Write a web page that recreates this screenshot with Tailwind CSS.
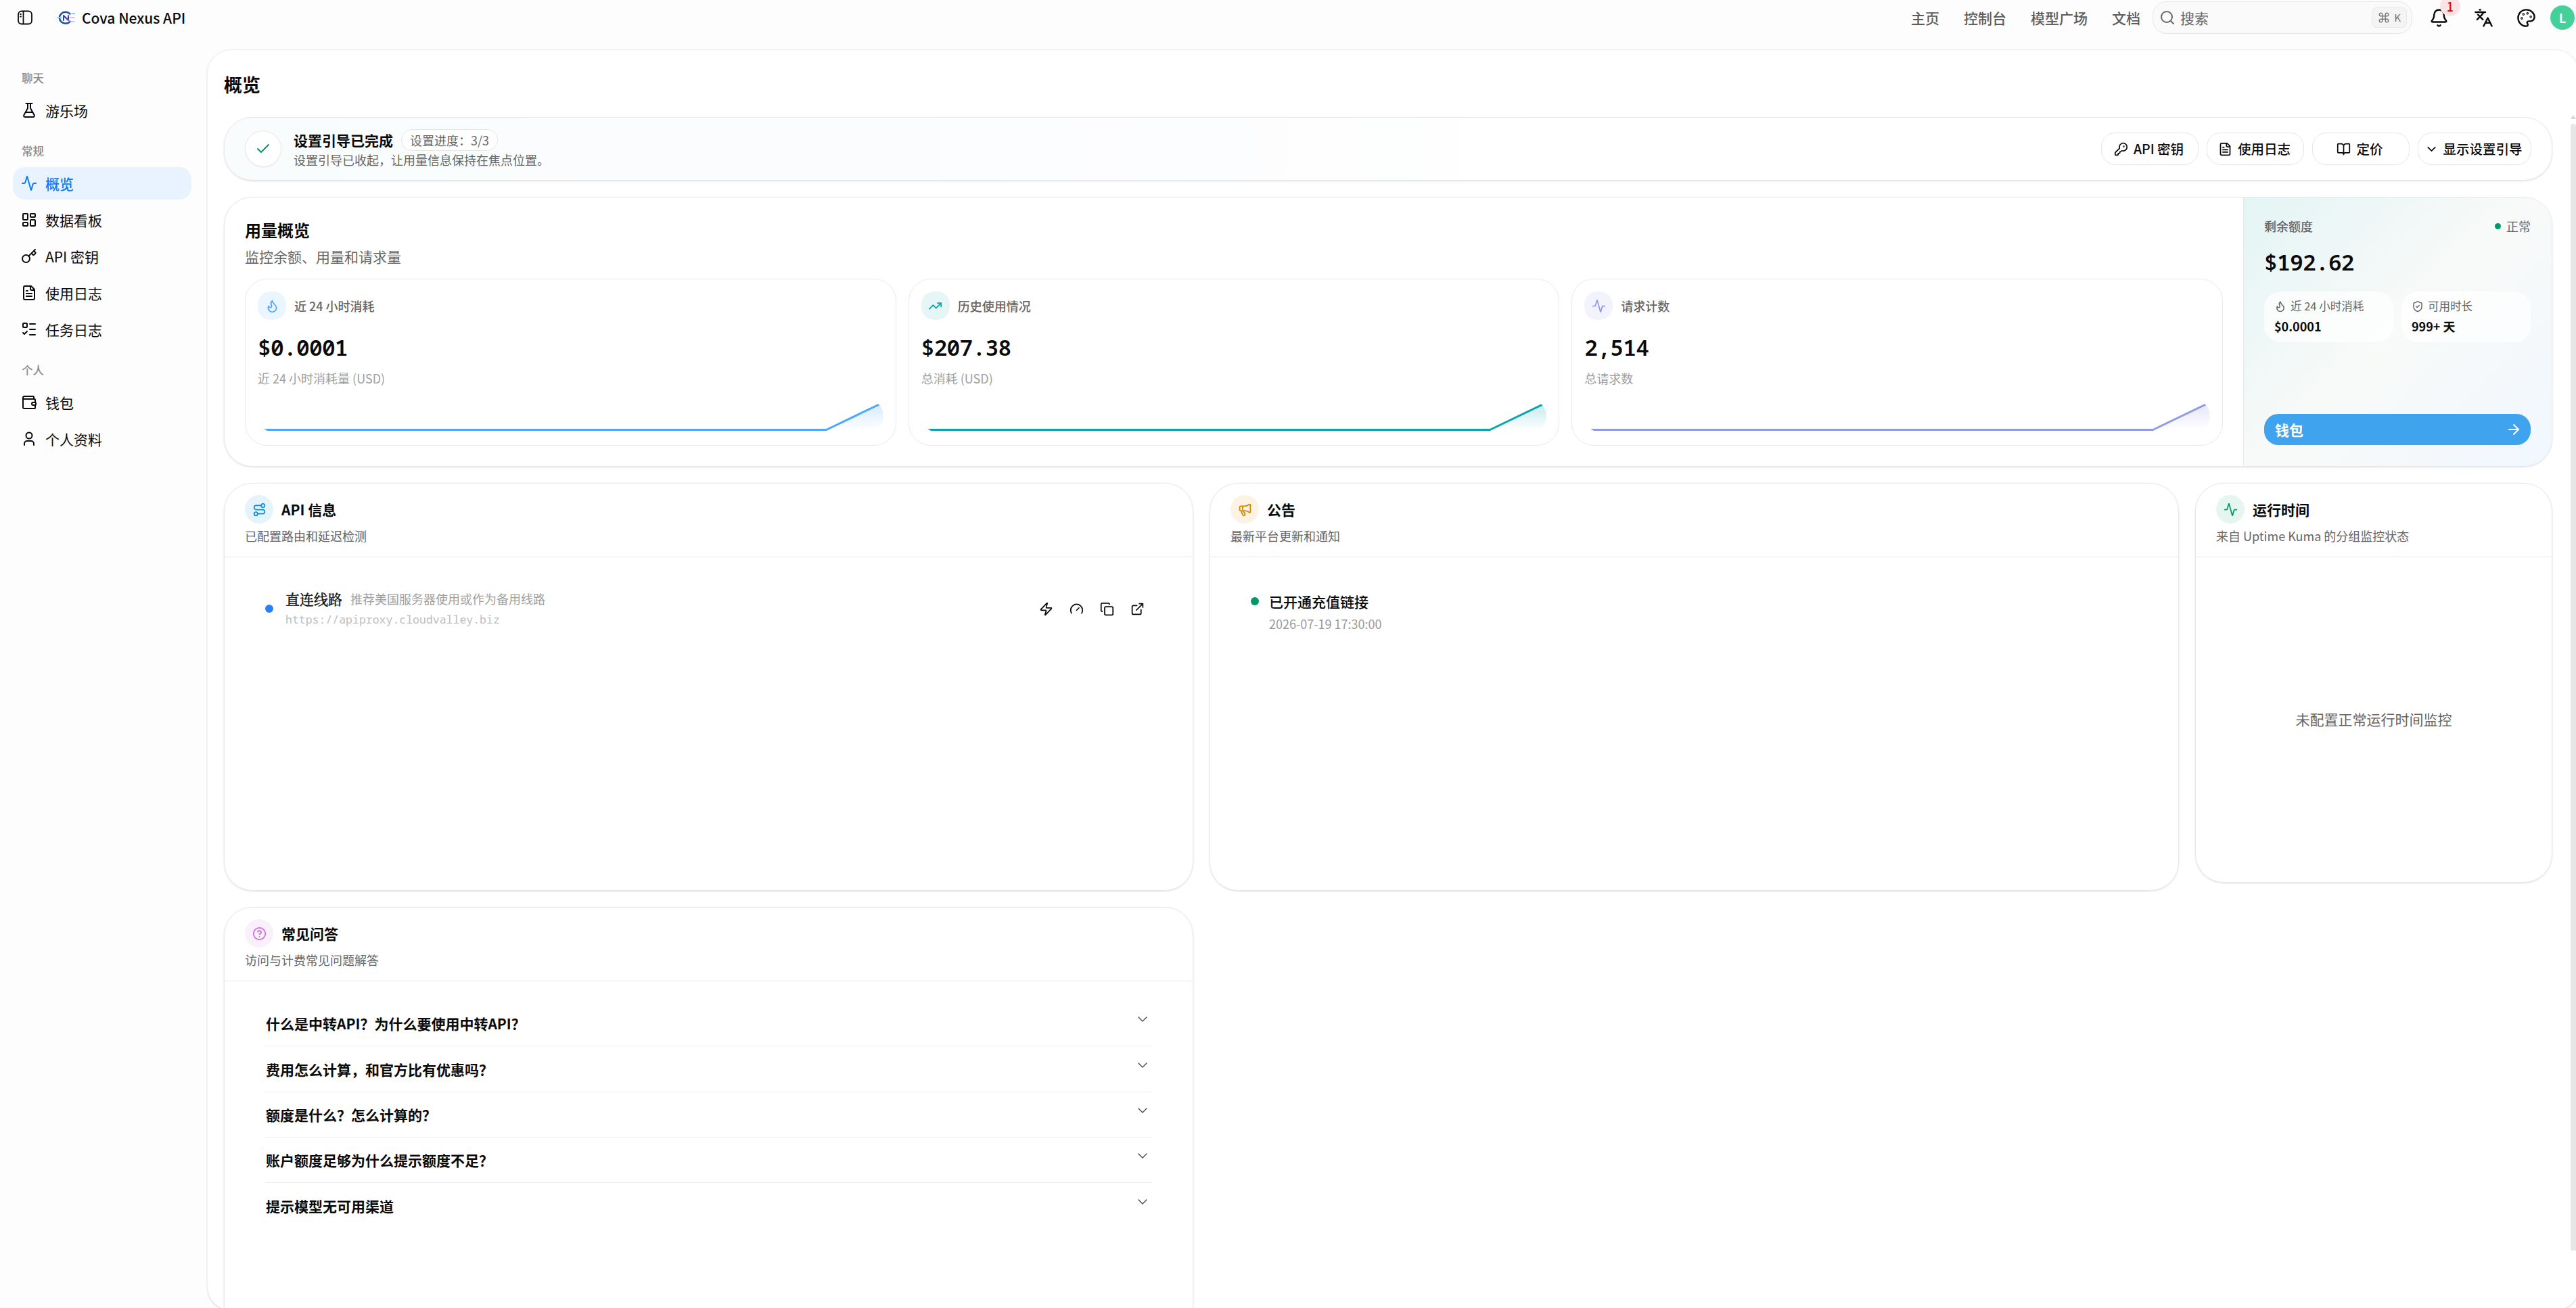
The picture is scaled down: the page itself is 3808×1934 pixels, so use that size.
<!DOCTYPE html>
<html lang="zh-CN">
<head>
<meta charset="utf-8">
<title>Cova Nexus API</title>
<script src="https://cdn.jsdelivr.net/npm/@tailwindcss/browser@4"></script>
</head>
<body class="w-[3808px] h-[1934px] overflow-hidden bg-[#fdfdfd] text-[#0a0a0a] font-['Noto_Sans_CJK_SC',sans-serif] text-[21px] leading-[30px]">
<svg class="absolute w-0 h-0" aria-hidden="true">
  <defs>
    <symbol id="flask" viewBox="0 0 24 24"><path d="M14 2v6.5a2 2 0 0 0 .25.96l5.5 9.9A1.8 1.8 0 0 1 18.2 22H5.8a1.8 1.8 0 0 1-1.55-2.64l5.5-9.9A2 2 0 0 0 10 8.5V2M7.5 2h9M7 15h10"/></symbol>
    <symbol id="activity" viewBox="0 0 24 24"><path d="M22 12h-2.48a2 2 0 0 0-1.93 1.46l-2.35 8.36a.25.25 0 0 1-.48 0L9.24 2.18a.25.25 0 0 0-.48 0l-2.35 8.36A2 2 0 0 1 4.49 12H2"/></symbol>
    <symbol id="dash" viewBox="0 0 24 24"><rect x="3" y="3" width="7" height="9" rx="1"/><rect x="14" y="3" width="7" height="5" rx="1"/><rect x="14" y="12" width="7" height="9" rx="1"/><rect x="3" y="16" width="7" height="5" rx="1"/></symbol>
    <symbol id="key" viewBox="0 0 24 24"><path d="m15.5 7.5 2.3 2.3a1 1 0 0 0 1.4 0l2.1-2.1a1 1 0 0 0 0-1.4L19 4M21 2l-9.6 9.6"/><circle cx="7.5" cy="15.5" r="5.5"/></symbol>
    <symbol id="keyround" viewBox="0 0 24 24"><path d="M2.586 17.414A2 2 0 0 0 2 18.828V21a1 1 0 0 0 1 1h3a1 1 0 0 0 1-1v-1a1 1 0 0 1 1-1h1a1 1 0 0 0 1-1v-1a1 1 0 0 1 1-1h.172a2 2 0 0 0 1.414-.586l.814-.814a6.5 6.5 0 1 0-4-4z"/><circle cx="16.5" cy="7.5" r=".5"/></symbol>
    <symbol id="file" viewBox="0 0 24 24"><path d="M15 2H6a2 2 0 0 0-2 2v16a2 2 0 0 0 2 2h12a2 2 0 0 0 2-2V7ZM14 2v4a2 2 0 0 0 2 2h4M10 9H8M16 13H8M16 17H8"/></symbol>
    <symbol id="todo" viewBox="0 0 24 24"><rect x="3" y="3" width="6" height="6" rx="1"/><path d="m3 17 2 2 4-4M13 4h8M13 12h8M13 20h8"/></symbol>
    <symbol id="wallet" viewBox="0 0 24 24"><path d="M19 7V4a1 1 0 0 0-1-1H5a2 2 0 0 0 0 4h15a1 1 0 0 1 1 1v4h-3a2 2 0 0 0 0 4h3a1 1 0 0 0 1-1v-2a1 1 0 0 0-1-1M3 5v14a2 2 0 0 0 2 2h15a1 1 0 0 0 1-1v-4"/></symbol>
    <symbol id="user" viewBox="0 0 24 24"><circle cx="12" cy="7" r="4.5"/><path d="M19 21v-2a4 4 0 0 0-4-4H9a4 4 0 0 0-4 4v2"/></symbol>
    <symbol id="search" viewBox="0 0 24 24"><circle cx="11" cy="11" r="8"/><path d="m21 21-4.3-4.3"/></symbol>
    <symbol id="bell" viewBox="0 0 24 24"><path d="M10.268 21a2 2 0 0 0 3.464 0M3.262 15.326A1 1 0 0 0 4 17h16a1 1 0 0 0 .74-1.673C19.41 13.956 18 12.499 18 8A6 6 0 0 0 6 8c0 4.499-1.411 5.956-2.738 7.326"/></symbol>
    <symbol id="lang" viewBox="0 0 24 24"><path d="m5 8 6 6M4 14l6-6 2-3M2 5h12M7 2h1M22 22l-5-10-5 10M14 18h6"/></symbol>
    <symbol id="palette" viewBox="0 0 24 24"><path d="M12 22a1 1 0 0 1 0-20 10 9 0 0 1 10 9 5 5 0 0 1-5 5h-2.25a1.75 1.75 0 0 0-1.4 2.8l.3.4a1.75 1.75 0 0 1-1.4 2.8z"/><circle cx="13.5" cy="6.5" r=".5"/><circle cx="17.5" cy="10.5" r=".5"/><circle cx="6.5" cy="12.5" r=".5"/><circle cx="8.5" cy="7.5" r=".5"/></symbol>
    <symbol id="command" viewBox="0 0 24 24"><path d="M15 6v12a3 3 0 1 0 3-3H6a3 3 0 1 0 3 3V6a3 3 0 1 0-3 3h12a3 3 0 1 0-3-3"/></symbol>
    <symbol id="check" viewBox="0 0 24 24"><path d="M20 6 9 17l-5-5"/></symbol>
    <symbol id="book" viewBox="0 0 24 24"><path d="M12 7v14M3 18a1 1 0 0 1-1-1V4a1 1 0 0 1 1-1h5a4 4 0 0 1 4 4 4 4 0 0 1 4-4h5a1 1 0 0 1 1 1v13a1 1 0 0 1-1 1h-6a3 3 0 0 0-3 3 3 3 0 0 0-3-3z"/></symbol>
    <symbol id="chev" viewBox="0 0 24 24"><path d="m6 9 6 6 6-6"/></symbol>
    <symbol id="flame" viewBox="0 0 24 24"><path d="M8.5 14.5A2.5 2.5 0 0 0 11 12c0-1.38-.5-2-1-3-1.072-2.143-.224-4.054 2-6 .5 2.5 2 4.9 4 6.5 2 1.6 3 3.5 3 5.5a7 7 0 1 1-14 0c0-1.153.433-2.294 1-3a2.5 2.5 0 0 0 2.5 2.5z"/></symbol>
    <symbol id="trend" viewBox="0 0 24 24"><path d="M22 7 13.5 15.500l-5-5L2 17M16 7h6v6"/></symbol>
    <symbol id="shield" viewBox="0 0 24 24"><path d="M20 13c0 5-3.500 7.500-7.660 8.950a1 1 0 0 1-.67-.01C7.500 20.500 4 18 4 13V6a1 1 0 0 1 1-1c2 0 4.500-1.200 6.240-2.720a1.170 1.170 0 0 1 1.520 0C14.510 3.810 17 5 19 5a1 1 0 0 1 1 1zM9 12l2 2 4-4"/></symbol>
    <symbol id="arrow" viewBox="0 0 24 24"><path d="M5 12h14M12 5l7 7-7 7"/></symbol>
    <symbol id="route" viewBox="0 0 24 24"><circle cx="6" cy="19" r="3"/><path d="M9 19h8.500a3.500 3.500 0 0 0 0-7h-11a3.500 3.500 0 0 1 0-7H15"/><circle cx="18" cy="5" r="3"/></symbol>
    <symbol id="mega" viewBox="0 0 24 24"><path d="M11 6a13 13 0 0 0 8.400-2.800A1 1 0 0 1 21 4v12a1 1 0 0 1-1.600.8A13 13 0 0 0 11 14H5a2 2 0 0 1-2-2V8a2 2 0 0 1 2-2zM6 14a12 12 0 0 0 2.400 7.200 2 2 0 0 0 3.200-2.400A8 8 0 0 1 10 14M8 6v8"/></symbol>
    <symbol id="help" viewBox="0 0 24 24"><circle cx="12" cy="12" r="10"/><path d="M9.090 9a3 3 0 0 1 5.830 1c0 2-3 3-3 3M12 17h.01"/></symbol>
    <symbol id="zap" viewBox="0 0 24 24"><path d="M4 14a1 1 0 0 1-.78-1.630l9.900-10.200a.5.5 0 0 1 .86.460l-1.920 6.020A1 1 0 0 0 13 10h7a1 1 0 0 1 .78 1.630l-9.900 10.200a.5.5 0 0 1-.86-.460l1.920-6.020A1 1 0 0 0 11 14z"/></symbol>
    <symbol id="gauge" viewBox="0 0 24 24"><path d="m12 14 4-4M3.340 19a10 10 0 1 1 17.320 0"/></symbol>
    <symbol id="copy" viewBox="0 0 24 24"><rect x="8" y="8" width="14" height="14" rx="2"/><path d="M4 16c-1.100 0-2-.9-2-2V4c0-1.100.9-2 2-2h10c1.100 0 2 .9 2 2"/></symbol>
    <symbol id="ext" viewBox="0 0 24 24"><path d="M15 3h6v6M10 14 21 3M18 13v6a2 2 0 0 1-2 2H5a2 2 0 0 1-2-2V8a2 2 0 0 1 2-2h6"/></symbol>
    <linearGradient id="g1" x1="0" y1="0" x2="0" y2="1"><stop offset="0" stop-color="#4da6ff" stop-opacity=".25"/><stop offset="1" stop-color="#4da6ff" stop-opacity="0"/></linearGradient>
    <linearGradient id="g2" x1="0" y1="0" x2="0" y2="1"><stop offset="0" stop-color="#06a4ad" stop-opacity=".25"/><stop offset="1" stop-color="#06a4ad" stop-opacity="0"/></linearGradient>
    <linearGradient id="g3" x1="0" y1="0" x2="0" y2="1"><stop offset="0" stop-color="#9197e9" stop-opacity=".25"/><stop offset="1" stop-color="#9197e9" stop-opacity="0"/></linearGradient>
  </defs>
</svg>
<div class="w-[3813px] h-[1938px] flex flex-col fill-none stroke-2 [stroke-linecap:round] [stroke-linejoin:round]">
  <header class="h-[73px] w-[3808px] shrink-0 flex items-start">
    <div class="h-[52px] w-full flex items-center pl-[25px] pr-[2px]">
      <svg class="size-6 stroke-current stroke-[1.800] shrink-0" viewBox="0 0 24 24"><rect x="2" y="2.500" width="20" height="19" rx="5"/><path d="M9.500 3v18M5 7h1M5 10.500h1"/></svg>
      <svg class="w-[28px] h-[22px] ml-[35px] shrink-0" viewBox="0 0 28 22">
        <path d="M19 5A9 8.500 0 1 0 19 17.500" stroke="#1d4fa8" stroke-width="2.600"/>
        <path d="M1 11h6" stroke="#7ddcf0" stroke-width="1.800"/>
        <path d="M10 15V8l7 7V8" stroke="#3b3fa0" stroke-width="2"/>
        <path d="M17 8l4-3h5M19 11h7M17 14l4 3h5" stroke="#9a8cf0" stroke-width="1.200"/>
        <path d="M24 5h2" stroke="#5fd6f0" stroke-width="1.800"/>
      </svg>
      <span class="ml-[9px] font-medium">Cova Nexus API</span>
      <nav class="ml-auto flex gap-9 font-medium text-[#5c5c5c]"><span>主页</span><span>控制台</span><span>模型广场</span><span>文档</span></nav>
      <div class="ml-[18px] w-[384px] h-12 rounded-[21px] border border-[#e6e6e6] bg-[#fafafa] flex items-center pl-[9px] pr-[7px] text-[#666]">
        <svg class="size-6 stroke-current"><use href="#search"/></svg>
        <span class="ml-[7px]">搜索</span>
        <kbd class="ml-auto w-[52px] h-[30px] rounded-[7px] border border-[#e8e8e8] bg-[#f4f4f4] flex items-center justify-center gap-[6px] text-[15px] font-['Noto_Sans_CJK_SC',sans-serif] text-[#737373]"><svg class="size-[18px] stroke-current stroke-[1.700]"><use href="#command"/></svg>K</kbd>
      </div>
      <div class="relative ml-[25px] size-[29px]"><svg class="size-[29px] stroke-current"><use href="#bell"/></svg>
        <span class="absolute left-[16px] -top-[18px] size-[30px] rounded-full bg-[#fbe3e5] text-[#e7000b] text-[18px] font-medium flex items-center justify-center leading-none">1</span>
      </div>
      <svg class="ml-[37px] size-[29px] stroke-current"><use href="#lang"/></svg>
      <svg class="ml-[34px] size-[29px] stroke-current"><use href="#palette"/></svg>
      <span class="ml-[21px] size-9 rounded-full bg-[#45d09a] text-white text-[18px] font-bold flex items-center justify-center leading-none">L</span>
    </div>
  </header>
  <div class="flex flex-1 min-h-0">
    <aside class="w-[306px] shrink-0 pl-[19px] pr-[23px] pt-[18px] flex flex-col">
      <div class="h-12 flex items-center pl-[13px] text-[16.500px] font-medium text-[#8a8a8a]">聊天</div>
      <a class="h-12 flex items-center gap-3 pl-3"><svg class="size-6 stroke-current"><use href="#flask"/></svg>游乐场</a>
      <div class="mt-3 h-12 flex items-center pl-[13px] text-[16.500px] font-medium text-[#8a8a8a]">常规</div>
      <div class="flex flex-col gap-[6px]">
        <a class="h-12 flex items-center gap-3 pl-3 rounded-[18px] bg-[#e8f3ff] text-[#0a7cf5] font-medium"><svg class="size-6 stroke-current"><use href="#activity"/></svg>概览</a>
        <a class="h-12 flex items-center gap-3 pl-3"><svg class="size-6 stroke-current"><use href="#dash"/></svg>数据看板</a>
        <a class="h-12 flex items-center gap-3 pl-3"><svg class="size-6 stroke-current"><use href="#key"/></svg>API 密钥</a>
        <a class="h-12 flex items-center gap-3 pl-3"><svg class="size-6 stroke-current"><use href="#file"/></svg>使用日志</a>
        <a class="h-12 flex items-center gap-3 pl-3"><svg class="size-6 stroke-current"><use href="#todo"/></svg>任务日志</a>
      </div>
      <div class="mt-3 h-12 flex items-center pl-[13px] text-[16.500px] font-medium text-[#8a8a8a]">个人</div>
      <div class="flex flex-col gap-[6px]">
        <a class="h-12 flex items-center gap-3 pl-3"><svg class="size-6 stroke-current"><use href="#wallet"/></svg>钱包</a>
        <a class="h-12 flex items-center gap-3 pl-3"><svg class="size-6 stroke-current"><use href="#user"/></svg>个人资料</a>
      </div>
    </aside>
    <main class="relative w-[3507px] shrink-0 rounded-[36px] border border-[#efefef] bg-white shadow-sm overflow-hidden pl-6 pt-[33px]">
      <!-- page scrollbar -->
      <div class="absolute left-[3493px] top-[96px] w-[8px] flex flex-col items-center">
        <i class="w-0 h-0 border-x-[4px] border-x-transparent border-b-[6px] border-b-[#d8d8d8]"></i>
        <i class="mt-[7px] w-full h-[1666px] rounded-t-[4px] bg-[#e6e6e6]"></i>
      </div>
      <div class="w-[3442px] flex flex-col">
        <h1 class="h-9 text-[27px] leading-9 font-bold">概览</h1>

        <section class="mt-[30px] h-[94px] rounded-[42px] border border-[#e7e7e7] shadow-sm bg-linear-to-r from-[#f9fcfc] via-[#fbfcfe] via-30% to-white to-60% flex items-center pl-[30px] pr-[30px]">
          <span class="size-[54px] rounded-full border border-[#e7e7e7] bg-white shadow-xs flex items-center justify-center text-[#009966]"><svg class="size-6 stroke-current"><use href="#check"/></svg></span>
          <div class="ml-[18px] flex flex-col">
            <div class="flex items-center h-8 gap-3"><b class="font-bold">设置引导已完成</b><span class="h-8 w-[143px] rounded-2xl border border-[#e7e7e7] bg-white flex items-center justify-center text-[18px] text-[#666]">设置进度：3/3</span></div>
            <span class="text-[18px] leading-[27px] text-[#666]">设置引导已收起，让用量信息保持在焦点位置。</span>
          </div>
          <div class="ml-auto flex gap-3 text-[19.500px] font-medium">
            <span class="w-36 h-12 rounded-[21px] border border-[#e5e5e5] bg-white flex items-center justify-center gap-[8px] pr-[3px]"><svg class="size-[21px] stroke-current"><use href="#keyround"/></svg>API 密钥</span>
            <span class="w-36 h-12 rounded-[21px] border border-[#e5e5e5] bg-white flex items-center justify-center gap-[8px] pr-[3px]"><svg class="size-[21px] stroke-current"><use href="#file"/></svg>使用日志</span>
            <span class="w-36 h-12 rounded-[21px] border border-[#e5e5e5] bg-white flex items-center justify-center gap-[8px] pr-[3px]"><svg class="size-[21px] stroke-current"><use href="#book"/></svg>定价</span>
            <span class="w-[168px] h-12 rounded-[21px] border border-[#e5e5e5] bg-white flex items-center justify-center gap-[6px] pr-[3px]"><svg class="size-[21px] stroke-current"><use href="#chev"/></svg>显示设置引导</span>
          </div>
        </section>

        <section class="mt-6 h-[399px] rounded-[42px] border border-[#e7e7e7] shadow-sm flex overflow-hidden">
          <div class="w-[2984px] pl-[30px] pr-[30px] pt-[30px]">
            <h2 class="text-2xl leading-9 font-bold">用量概览</h2>
            <p class="mt-[5px] leading-[32px] text-[#666]">监控余额、用量和请求量</p>
            <div class="mt-[17px] grid grid-cols-3 gap-[18px]">
              <div class="h-[247px] rounded-[33px] border border-[#e9e9e9] px-[18px] pt-[18px]">
                <div class="flex items-center gap-3 text-[18px] font-medium text-[#666]"><span class="size-[42px] rounded-[19px] bg-[#ebf5ff] text-[#4da6ff] flex items-center justify-center"><svg class="size-[21px] stroke-current"><use href="#flame"/></svg></span>近 24 小时消耗</div>
                <div class="mt-[20px] h-[42px] leading-[42px] text-[33px] font-semibold slashed-zero tracking-[-0.825px] font-['Noto_Sans_Mono','DejaVu_Sans_Mono',monospace]">$0.0001</div>
                <div class="mt-[11px] text-[18px] leading-[27px] text-[#a0a0a0]">近 24 小时消耗量 (USD)</div>
                <div class="mt-[18px] h-12 rounded-3xl overflow-hidden"><svg class="w-full h-12 stroke-[3]" viewBox="0 0 924 48" preserveAspectRatio="none"><path d="M0 44.500H840L924 4V45H0Z" fill="url(#g1)"/><path d="M0 44.500H840L924 4" stroke="#4da6ff"/></svg></div>
              </div>
              <div class="h-[247px] rounded-[33px] border border-[#e9e9e9] px-[18px] pt-[18px]">
                <div class="flex items-center gap-3 text-[18px] font-medium text-[#666]"><span class="size-[42px] rounded-[19px] bg-[#e6f6f6] text-[#06a4ad] flex items-center justify-center"><svg class="size-[21px] stroke-current"><use href="#trend"/></svg></span>历史使用情况</div>
                <div class="mt-[20px] h-[42px] leading-[42px] text-[33px] font-semibold slashed-zero tracking-[-0.825px] font-['Noto_Sans_Mono','DejaVu_Sans_Mono',monospace]">$207.38</div>
                <div class="mt-[11px] text-[18px] leading-[27px] text-[#a0a0a0]">总消耗 (USD)</div>
                <div class="mt-[18px] h-12 rounded-3xl overflow-hidden"><svg class="w-full h-12 stroke-[3]" viewBox="0 0 924 48" preserveAspectRatio="none"><path d="M0 44.500H840L924 4V45H0Z" fill="url(#g2)"/><path d="M0 44.500H840L924 4" stroke="#06a4ad"/></svg></div>
              </div>
              <div class="h-[247px] rounded-[33px] border border-[#e9e9e9] px-[18px] pt-[18px]">
                <div class="flex items-center gap-3 text-[18px] font-medium text-[#666]"><span class="size-[42px] rounded-[19px] bg-[#f3f3fd] text-[#9197e9] flex items-center justify-center"><svg class="size-[21px] stroke-current"><use href="#activity"/></svg></span>请求计数</div>
                <div class="mt-[20px] h-[42px] leading-[42px] text-[33px] font-semibold slashed-zero tracking-[-0.825px] font-['Noto_Sans_Mono','DejaVu_Sans_Mono',monospace]">2,514</div>
                <div class="mt-[11px] text-[18px] leading-[27px] text-[#a0a0a0]">总请求数</div>
                <div class="mt-[18px] h-12 rounded-3xl overflow-hidden"><svg class="w-full h-12 stroke-[3]" viewBox="0 0 924 48" preserveAspectRatio="none"><path d="M0 44.500H840L924 4V45H0Z" fill="url(#g3)"/><path d="M0 44.500H840L924 4" stroke="#9197e9"/></svg></div>
              </div>
            </div>
          </div>
          <div class="flex-1 border-l border-[#e7e7e7] bg-linear-135 from-[#e4f4f5] via-[#f8faf8] to-[#f1f7ff] pl-[30px] pr-[31px] pt-[29px] flex flex-col">
            <div class="flex items-center justify-between text-[18px] leading-[27px] text-[#666]"><span class="font-medium">剩余额度</span><span class="flex items-center gap-[8px]"><i class="size-[9px] rounded-full bg-[#009966]"></i>正常</span></div>
            <div class="mt-[19px] h-[42px] leading-[42px] text-[33px] font-semibold slashed-zero tracking-[-0.825px] font-['Noto_Sans_Mono','DejaVu_Sans_Mono',monospace]">$192.62</div>
            <div class="mt-[22px] grid grid-cols-2 gap-3">
              <div class="h-[75px] rounded-[24px] bg-white/70 pl-[15px] pt-[9px]">
                <div class="flex items-center gap-[6px] text-[16.500px] leading-[25px] text-[#666]"><svg class="size-[18px] stroke-current"><use href="#flame"/></svg>近 24 小时消耗</div>
                <div class="mt-[4px] text-[18px] leading-[27px] font-bold">$0.0001</div>
              </div>
              <div class="h-[75px] rounded-[24px] bg-white/70 pl-[15px] pt-[9px]">
                <div class="flex items-center gap-[6px] text-[16.500px] leading-[25px] text-[#666]"><svg class="size-[18px] stroke-current"><use href="#shield"/></svg>可用时长</div>
                <div class="mt-[4px] text-[18px] leading-[27px] font-bold">999+ 天</div>
              </div>
            </div>
            <div class="mt-[106px] h-[46px] rounded-[21px] bg-[#3fa3ee] text-white font-bold flex items-center justify-between pl-[16px] pr-[13px] leading-[28px]">钱包<svg class="size-6 stroke-current"><use href="#arrow"/></svg></div>
          </div>
        </section>

        <div class="mt-6 flex gap-6 items-start">
          <div class="w-[1433px] flex flex-col gap-6">
            <section class="h-[603px] rounded-[42px] border border-[#e7e7e7] shadow-sm">
              <div class="h-[109px] border-b border-[#e7e7e7] pl-[30px] pt-[17px]">
                <div class="flex items-center gap-3 font-bold"><span class="size-[42px] rounded-full bg-[#e5f3fb] text-[#0a8fdb] flex items-center justify-center"><svg class="size-[21px] stroke-current"><use href="#route"/></svg></span>API 信息</div>
                <p class="mt-[5px] text-[18px] leading-[27px] text-[#666]">已配置路由和延迟检测</p>
              </div>
              <div class="mt-[46px] flex items-center pl-[60px] pr-[71px]">
                <i class="size-3 rounded-full bg-[#2b7fff]"></i>
                <div class="ml-[18px]">
                  <div class="flex items-center gap-3"><span class="font-['Noto_Serif_CJK_SC','Noto_Sans_CJK_SC',serif] [-webkit-text-stroke:0.4px_#0a0a0a]">直连线路</span><span class="text-[18px] text-[#a0a0a0]">推荐美国服务器使用或作为备用线路</span></div>
                  <div class="text-[16.500px] leading-[29px] pt-px text-[#bdbdbd] font-['Noto_Sans_Mono','DejaVu_Sans_Mono',monospace]">https://apiproxy.cloudvalley.biz</div>
                </div>
                <div class="ml-auto flex gap-6">
                  <svg class="size-[21px] stroke-current"><use href="#zap"/></svg><svg class="size-[21px] stroke-current"><use href="#gauge"/></svg><svg class="size-[21px] stroke-current"><use href="#copy"/></svg><svg class="size-[21px] stroke-current"><use href="#ext"/></svg>
                </div>
              </div>
            </section>
            <section class="h-[640px] rounded-[42px] border border-[#e7e7e7] shadow-sm">
              <div class="h-[109px] border-b border-[#e7e7e7] pl-[30px] pt-[17px]">
                <div class="flex items-center gap-3 font-bold"><span class="size-[42px] rounded-full bg-[#faf0fb] text-[#d26be0] flex items-center justify-center"><svg class="size-[21px] stroke-current"><use href="#help"/></svg></span>常见问答</div>
                <p class="mt-[5px] text-[18px] leading-[27px] text-[#666]">访问与计费常见问题解答</p>
              </div>
              <div class="mt-[29px] mx-[60px] font-bold">
                <div class="h-[67px] border-b border-[#efefef] flex items-center justify-between pr-[2px] pl-px">什么是中转API？为什么要使用中转API？<svg class="-mt-[12px] size-6 stroke-[#555] stroke-[1.500]"><use href="#chev"/></svg></div>
                <div class="h-[68px] border-b border-[#efefef] flex items-center justify-between pr-[2px] pl-px">费用怎么计算，和官方比有优惠吗？<svg class="-mt-[12px] size-6 stroke-[#555] stroke-[1.500]"><use href="#chev"/></svg></div>
                <div class="h-[67px] border-b border-[#efefef] flex items-center justify-between pr-[2px] pl-px">额度是什么？怎么计算的？<svg class="-mt-[12px] size-6 stroke-[#555] stroke-[1.500]"><use href="#chev"/></svg></div>
                <div class="h-[67px] border-b border-[#efefef] flex items-center justify-between pr-[2px] pl-px">账户额度足够为什么提示额度不足？<svg class="-mt-[12px] size-6 stroke-[#555] stroke-[1.500]"><use href="#chev"/></svg></div>
                <div class="h-[67px] flex items-center justify-between pr-[2px] pl-px">提示模型无可用渠道<svg class="-mt-[12px] size-6 stroke-[#555] stroke-[1.500]"><use href="#chev"/></svg></div>
              </div>
            </section>
          </div>
          <section class="w-[1433px] h-[603px] rounded-[42px] border border-[#e7e7e7] shadow-sm">
            <div class="h-[109px] border-b border-[#e7e7e7] pl-[30px] pt-[17px]">
              <div class="flex items-center gap-3 font-bold"><span class="size-[42px] rounded-full bg-[#fcf3e5] text-[#d08700] flex items-center justify-center"><svg class="size-[21px] stroke-current"><use href="#mega"/></svg></span>公告</div>
              <p class="mt-[5px] text-[18px] leading-[27px] text-[#666]">最新平台更新和通知</p>
            </div>
            <div class="mt-[49px] flex pl-[60px]">
              <i class="mt-[10px] size-3 rounded-full bg-[#009966]"></i>
              <div class="ml-[15px]"><div class="font-medium leading-[32px]">已开通充值链接</div><div class="mt-[4px] text-[18px] leading-[27px] text-[#999]">2026-07-19 17:30:00</div></div>
            </div>
          </section>
          <section class="w-[528px] h-[591px] rounded-[42px] border border-[#e7e7e7] shadow-sm flex flex-col">
            <div class="h-[109px] border-b border-[#e7e7e7] pl-[30px] pt-[17px]">
              <div class="flex items-center gap-3 font-bold"><span class="size-[42px] rounded-full bg-[#e5f5ef] text-[#009966] flex items-center justify-center"><svg class="size-[21px] stroke-current"><use href="#activity"/></svg></span>运行时间</div>
              <p class="mt-[5px] text-[18px] leading-[27px] text-[#666]">来自 Uptime Kuma 的分组监控状态</p>
            </div>
            <div class="flex-1 flex items-center justify-center pb-[3px] text-[#666]">未配置正常运行时间监控</div>
          </section>
        </div>
      </div>
    </main>
  </div>
</div>
</body>
</html>
